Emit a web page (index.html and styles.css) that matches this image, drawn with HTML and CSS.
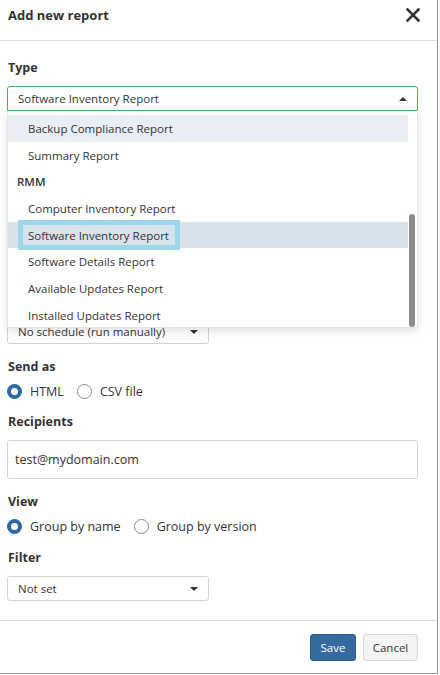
FILE: index.html
```
<!DOCTYPE html>
<html lang="en">
<head>
    <meta charset="UTF-8">
    <meta name="viewport" content="width=device-width, initial-scale=1.0">
    <title>Add new report</title>
    <link rel="stylesheet" href="styles.css">
</head>
<body>
    <div class="dialog">
        <div class="dialog-header">
            <h1 class="dialog-title">Add new report</h1>
            <button type="button" class="close-btn" aria-label="Close">
                <svg width="14" height="14" viewBox="0 0 14 14">
                    <path d="M1.5 1.5 L12.5 12.5 M12.5 1.5 L1.5 12.5" stroke="#333" stroke-width="2.6" stroke-linecap="square" fill="none"/>
                </svg>
            </button>
        </div>

        <div class="dialog-body">
            <div class="field">
                <label class="field-label">Type</label>
                <div class="select-wrap">
                    <div class="select select-open">
                        <span>Software Inventory Report</span>
                        <span class="caret caret-up"></span>
                    </div>

                    <!-- open dropdown list, drawn over the form -->
                    <div class="dropdown">
                        <ul class="dropdown-list">
                            <li class="item item-hover">Backup Compliance Report</li>
                            <li class="item">Summary Report</li>
                            <li class="group">RMM</li>
                            <li class="item">Computer Inventory Report</li>
                            <li class="item item-selected"><span class="focus-ring">Software Inventory Report</span></li>
                            <li class="item">Software Details Report</li>
                            <li class="item">Available Updates Report</li>
                            <li class="item">Installed Updates Report</li>
                        </ul>
                        <div class="scroll-thumb"></div>
                    </div>
                </div>
            </div>

            <!-- schedule field sits mostly under the open list -->
            <div class="field field-schedule">
                <div class="select select-short">
                    <span>No schedule (run manually)</span>
                    <span class="caret"></span>
                </div>
            </div>

            <div class="field field-send">
                <label class="field-label">Send as</label>
                <div class="radio-row">
                    <label class="radio"><span class="radio-dot checked"></span>HTML</label>
                    <label class="radio"><span class="radio-dot"></span>CSV file</label>
                </div>
            </div>

            <div class="field field-recipients">
                <label class="field-label">Recipients</label>
                <div class="input">test@mydomain.com</div>
            </div>

            <div class="field field-view">
                <label class="field-label">View</label>
                <div class="radio-row">
                    <label class="radio"><span class="radio-dot checked"></span>Group by name</label>
                    <label class="radio"><span class="radio-dot"></span>Group by version</label>
                </div>
            </div>

            <div class="field field-filter">
                <label class="field-label">Filter</label>
                <div class="select select-short">
                    <span>Not set</span>
                    <span class="caret"></span>
                </div>
            </div>
        </div>

        <div class="dialog-footer">
            <button type="button" class="btn btn-primary">Save</button>
            <button type="button" class="btn btn-cancel">Cancel</button>
        </div>
    </div>
</body>
</html>
```

FILE: styles.css
```
* {
    margin: 0;
    padding: 0;
    box-sizing: border-box;
}

body {
    font-family: 'Open Sans', 'Noto Sans', sans-serif;
    background: #ffffff;
    color: #333333;
    font-size: 11.5px;
}

.dialog {
    width: 438px;
    height: 674px;
    border-right: 1px solid #9a9a9a;
    border-bottom: 1px solid #9a9a9a;
    display: flex;
    flex-direction: column;
    background: #ffffff;
}

.dialog-header {
    height: 41px;
    border-bottom: 1px solid #dcdcdc;
    display: flex;
    align-items: center;
    justify-content: space-between;
    padding: 0 17px 0 8px;
}

.dialog-title {
    font-size: 13px;
    font-weight: 700;
    color: #333333;
    margin-top: -10px;
}

.close-btn {
    border: none;
    background: none;
    width: 14px;
    height: 14px;
    margin-top: -11px;
    cursor: pointer;
    display: flex;
}

.dialog-body {
    flex: 1;
    padding: 18px 19px 0 7px;
}

.field-label {
    display: block;
    height: 18px;
    line-height: 18px;
    font-size: 12.5px;
    font-weight: 700;
    margin-bottom: 9px;
    padding-left: 1px;
}

.select-wrap {
    position: relative;
}

.select {
    height: 25px;
    border: 1px solid #d2d2d2;
    border-radius: 3px;
    display: flex;
    align-items: center;
    justify-content: space-between;
    padding: 0 10px 0 10px;
    font-size: 11.5px;
    background: #ffffff;
}

.select-open {
    border-color: #4db14a;
    border-radius: 3px 3px 0 0;
}

.select-short {
    width: 202px;
}

.caret {
    width: 0;
    height: 0;
    border-left: 4px solid transparent;
    border-right: 4px solid transparent;
    border-top: 4px solid #333333;
}

.caret.caret-up {
    border-top: none;
    border-bottom: 4px solid #333333;
}

.dropdown {
    position: absolute;
    top: 25px;
    left: 0;
    right: 0;
    height: 217px;
    background: #ffffff;
    border: 1px solid #e4e4e4;
    border-top: none;
    box-shadow: 0 3px 8px rgba(0, 0, 0, 0.12);
    z-index: 10;
    overflow: hidden;
}

.dropdown-list {
    list-style: none;
    padding: 4px 9px 0 0;
}

.item, .group {
    height: 26.7px;
    display: flex;
    align-items: center;
}

.item {
    padding-left: 20px;
}

.group {
    padding-left: 9px;
    font-weight: 600;
}

.item-hover {
    background: #e9eef5;
}

.item-selected {
    background: #d8e2ec;
}

.focus-ring {
    margin-left: -10px;
    padding: 0 11px 0 10px;
    height: 30px;
    display: flex;
    align-items: center;
    outline: 5px solid #9cd8ea;
    outline-offset: -5px;
}

.scroll-thumb {
    position: absolute;
    right: 2px;
    top: 103px;
    width: 6px;
    height: 113px;
    border-radius: 3px;
    background: #8c8c8c;
}

.field-schedule {
    margin-top: 208px;
}

.field-send {
    margin-top: 14px;
}

.radio-row {
    display: flex;
    align-items: center;
    gap: 13px;
    margin-top: -4px;
    height: 20px;
    font-size: 12.5px;
}

.radio {
    display: flex;
    align-items: center;
    gap: 8px;
}

.radio-dot {
    width: 15px;
    height: 15px;
    border-radius: 50%;
    border: 1px solid #8a8a8a;
    background: #ffffff;
}

.radio-dot.checked {
    border: 4px solid #2f68a3;
}

.field-recipients {
    margin-top: 12px;
}

.input {
    height: 39px;
    border: 1px solid #d2d2d2;
    border-radius: 3px;
    display: flex;
    align-items: center;
    padding: 0 7px;
    font-size: 12.5px;
}

.field-view {
    margin-top: 14px;
}

.field-filter {
    margin-top: 13px;
}

.dialog-footer {
    border-top: 1px solid #dcdcdc;
    display: flex;
    justify-content: flex-end;
    gap: 7px;
    padding: 13px 19px 12px 0;
}

.btn {
    height: 27px;
    font-family: 'Open Sans', 'Noto Sans', sans-serif;
    font-size: 11.5px;
    color: #333333;
    background: #f4f4f4;
    border: 1px solid #d8d8d8;
    border-radius: 3px;
    cursor: pointer;
}

.btn-primary {
    width: 46px;
    background: #356a9f;
    border-color: #2b5a8a;
    color: #ffffff;
}

.btn-cancel {
    width: 55px;
}
```
